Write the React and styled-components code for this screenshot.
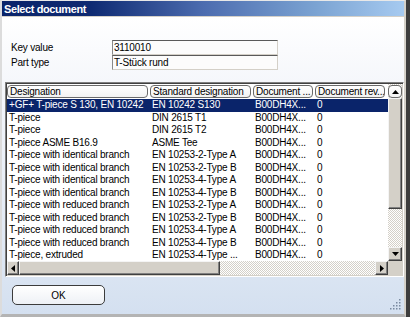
import React from 'react';
import styled, { createGlobalStyle } from 'styled-components';

const GlobalStyle = createGlobalStyle`
  html, body {
    margin: 0;
    padding: 0;
    background: #3d3d3d;
  }
  body {
    font-family: "Liberation Sans", Arial, sans-serif;
    font-size: 10px;
    letter-spacing: -0.2px;
    color: #000;
  }
`;

const Window = styled.div`
  position: relative;
  width: 406px;
  height: 317px;
  box-sizing: border-box;
  display: flex;
  flex-direction: column;
  border-left: 2px solid #dcdcdc;
  border-top: 1px solid #e8e8e8;
  border-right: 2px solid #d4d0c8;
  border-bottom: 3px solid #b4b4b4;
  background: #d4d0c8;
`;

const TitleBar = styled.div`
  height: 16px;
  flex: none;
  box-sizing: border-box;
  padding: 1px 0 0 2px;
  line-height: 15px;
  font-size: 11px;
  font-weight: bold;
  letter-spacing: -0.4px;
  color: #fff;
  background: linear-gradient(to right, #0a246a 0%, #0e2a72 22%, #4c6caf 50%, #7ba3d2 78%, #a6caf0 100%);
  border-bottom: 1px solid #d4d0c8;
`;

const Body = styled.div`
  flex: 1;
  display: flex;
  flex-direction: column;
  background: linear-gradient(180deg, #ffffff 0%, #f5f7fb 22%, #e2eaf5 70%, #d4e0f0 100%);
`;

const Form = styled.div`
  display: grid;
  grid-template-columns: 101px 166px;
  grid-auto-rows: 15px;
  margin: 23px 0 0 9px;
`;

const Label = styled.div`
  line-height: 15px;
`;

const Field = styled.div`
  box-sizing: border-box;
  height: 15px;
  padding-left: 1px;
  line-height: 13px;
  background: #fcfcfc;
  border: 1px solid;
  border-color: #5a5a5a #d4d0c8 #d4d0c8 #8a8a8a;
`;

const Frame = styled.div`
  margin: 12px 0 0 3px;
  width: 399px;
  height: 195px;
  box-sizing: border-box;
  border: 1px solid;
  border-color: #808080 #ffffff #ffffff #808080;
  box-shadow: inset 1px 1px #404040, inset -1px -1px #d4d0c8;
  padding: 1px;
  display: grid;
  grid-template-columns: 381px 14px;
  grid-template-rows: 177px 14px;
  background: #fff;
`;

const ListArea = styled.div`
  overflow: hidden;
  background: #fff;
`;

const Cols = styled.div`
  display: grid;
  grid-template-columns: 143px 103px 62px 72px;
  height: ${(p) => (p.$head ? '15px' : '12.5px')};
  line-height: 12.5px;
  white-space: nowrap;
  background: ${(p) => (p.$selected ? '#0a246a' : 'transparent')};
  color: ${(p) => (p.$selected ? '#fff' : '#000')};
`;

const Cell = styled.div`
  overflow: hidden;
  padding-left: 2px;
`;

const HeadCell = styled.div`
  box-sizing: border-box;
  height: 13px;
  margin: 1px 2px 0 0;
  padding-left: 2px;
  line-height: 11px;
  overflow: hidden;
  white-space: nowrap;
  border: 1px solid #6a6a6a;
  border-radius: 4px;
  background: linear-gradient(#ffffff, #f2f2f2);
`;

const VScroll = styled.div`
  display: flex;
  flex-direction: column;
  background: repeating-conic-gradient(#ffffff 0 25%, #d4d0c8 0 50%) 0 0 / 2px 2px;
`;

const HScroll = styled.div`
  display: flex;
  background: repeating-conic-gradient(#ffffff 0 25%, #d4d0c8 0 50%) 0 0 / 2px 2px;
`;

const Arrow = styled.div`
  flex: none;
  box-sizing: border-box;
  width: ${(p) => p.$w || '14px'};
  height: ${(p) => p.$h || '14px'};
  display: flex;
  align-items: center;
  justify-content: center;
  background: #d4d0c8;
  border: 1px solid;
  border-color: #f4f4f4 #404040 #404040 #f4f4f4;
  box-shadow: inset -1px -1px #808080;
`;

const UpButton = styled(Arrow)`
  border: 1px solid #6a6a6a;
  border-radius: 4px;
  box-shadow: none;
  margin-top: 1px;
  height: 13px;
  background: linear-gradient(#ffffff, #f2f2f2);
`;

const Thumb = styled.div`
  flex: none;
  box-sizing: border-box;
  width: ${(p) => p.$w || '100%'};
  height: ${(p) => p.$h || '100%'};
  background: #d4d0c8;
  border: 1px solid;
  border-color: #f4f4f4 #404040 #404040 #f4f4f4;
  box-shadow: inset -1px -1px #808080;
`;

const Gap = styled.div`
  flex: 1;
`;

const Corner = styled.div`
  background: #d4d0c8;
`;

const Footer = styled.div`
  margin: 8px 0 0 10px;
`;

const OkButton = styled.button`
  width: 93px;
  height: 20px;
  padding: 0;
  font-family: "Liberation Sans", Arial, sans-serif;
  font-size: 10px;
  color: #000;
  border: 1px solid #3c3c3c;
  border-radius: 5px;
  background: linear-gradient(#ffffff, #eef1f6);
`;

const Grip = styled.svg`
  position: absolute;
  right: 3px;
  bottom: 4px;
`;

const Tri = ({ dir }) => {
  const pts = {
    up: '0,4 3.5,0 7,4',
    down: '0,0 3.5,4 7,0',
    left: '4,0 0,3.5 4,7',
    right: '0,0 4,3.5 0,7',
  }[dir];
  const vertical = dir === 'up' || dir === 'down';
  return (
    <svg width={vertical ? 7 : 4} height={vertical ? 4 : 7}>
      <polygon points={pts} fill="#000" />
    </svg>
  );
};

const rows = [
  ['+GF+ T-piece S 130, EN 10242', 'EN 10242 S130'],
  ['T-piece', 'DIN 2615 T1'],
  ['T-piece', 'DIN 2615 T2'],
  ['T-piece ASME B16.9', 'ASME Tee'],
  ['T-piece with identical branch', 'EN 10253-2-Type A'],
  ['T-piece with identical branch', 'EN 10253-2-Type B'],
  ['T-piece with identical branch', 'EN 10253-4-Type A'],
  ['T-piece with identical branch', 'EN 10253-4-Type B'],
  ['T-piece with reduced branch', 'EN 10253-2-Type A'],
  ['T-piece with reduced branch', 'EN 10253-2-Type B'],
  ['T-piece with reduced branch', 'EN 10253-4-Type A'],
  ['T-piece with reduced branch', 'EN 10253-4-Type B'],
  ['T-piece, extruded', 'EN 10253-4-Type ...'],
];

const gripDots = [
  [9, 1], [6, 4], [9, 4], [3, 7], [6, 7], [9, 7], [0, 10], [3, 10], [6, 10], [9, 10],
];

export default function App() {
  return (
    <>
      <GlobalStyle />
      <Window>
        <TitleBar>Select document</TitleBar>
        <Body>
          <Form>
            <Label>Key value</Label>
            <Field>3110010</Field>
            <Label>Part type</Label>
            <Field>T-Stück rund</Field>
          </Form>

          <Frame>
            <ListArea>
              <Cols $head>
                <HeadCell>Designation</HeadCell>
                <HeadCell>Standard designation</HeadCell>
                <HeadCell>Document ...</HeadCell>
                <HeadCell>Document rev...</HeadCell>
              </Cols>
              {rows.map(([name, std], i) => (
                <Cols key={i} $selected={i === 0}>
                  <Cell>{name}</Cell>
                  <Cell>{std}</Cell>
                  <Cell>B00DH4X...</Cell>
                  <Cell>0</Cell>
                </Cols>
              ))}
            </ListArea>
            <VScroll>
              <UpButton>
                <Tri dir="up" />
              </UpButton>
              <Thumb $h="111px" />
              <Gap />
              <Arrow>
                <Tri dir="down" />
              </Arrow>
            </VScroll>
            <HScroll>
              <Arrow $w="12px">
                <Tri dir="left" />
              </Arrow>
              <Thumb $w="201px" />
              <Gap />
              <Arrow $w="13px">
                <Tri dir="right" />
              </Arrow>
            </HScroll>
            <Corner />
          </Frame>

          <Footer>
            <OkButton>OK</OkButton>
          </Footer>
        </Body>
        <Grip width="11" height="12">
          {gripDots.map(([x, y], i) => (
            <rect key={i} x={x} y={y} width="1.5" height="1.5" fill="#7a8aa0" />
          ))}
        </Grip>
      </Window>
    </>
  );
}
